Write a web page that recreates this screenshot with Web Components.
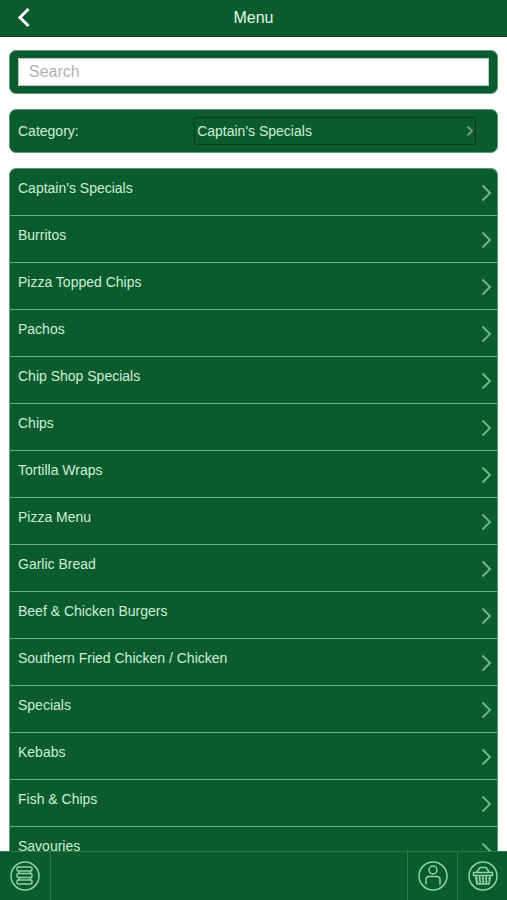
<!DOCTYPE html>
<html lang="en">
<head>
<meta charset="utf-8">
<meta name="viewport" content="width=device-width, initial-scale=1">
<title>Menu</title>
<style>
  html,
  body {
    height: 100%;
    margin: 0;
  }

  body {
    --green: #0a5c2e;
    --text: #cdeed6;
    --line: #6fae86;
    background: #fff;
    color: var(--text);
    font-family: "Liberation Sans", Arial, sans-serif;
    font-size: 14px;
    line-height: 16px;
  }
</style>
</head>
<body>
<menu-page>
  <title-bar slot="header">Menu</title-bar>
  <card-panel><search-box></search-box></card-panel>
  <card-panel><category-picker></category-picker></card-panel>
  <category-list></category-list>
  <tab-bar slot="footer"></tab-bar>
</menu-page>

<script>
const categories = [
  "Captain's Specials",
  "Burritos",
  "Pizza Topped Chips",
  "Pachos",
  "Chip Shop Specials",
  "Chips",
  "Tortilla Wraps",
  "Pizza Menu",
  "Garlic Bread",
  "Beef & Chicken Burgers",
  "Southern Fried Chicken / Chicken",
  "Specials",
  "Kebabs",
  "Fish & Chips",
  "Savouries",
];

function makeTemplate(html) {
  const template = document.createElement("template");
  template.innerHTML = html;
  return template;
}

class BaseElement extends HTMLElement {
  constructor() {
    super();
    this.shadow = this.attachShadow({ mode: "open" });
    this.shadow.append(this.constructor.template.content.cloneNode(true));
  }
}

class MenuPage extends BaseElement {
  static template = makeTemplate(`
<style>
  :host {
    display: flex;
    flex-direction: column;
    height: 100vh;
  }
  main {
    flex: 1;
    min-height: 0;
    box-sizing: border-box;
    display: flex;
    flex-direction: column;
    gap: 15px;
    padding: 13px 9px 0;
    overflow-y: auto;
    scrollbar-width: none;
  }
</style>
<slot name="header"></slot>
<main><slot></slot></main>
<slot name="footer"></slot>
`);
}

class TitleBar extends BaseElement {
  static template = makeTemplate(`
<style>
  :host {
    display: grid;
    grid-template-columns: 48px 1fr 48px;
    align-items: center;
    height: 36px;
    background: var(--green);
    border-bottom: 1px solid #0a4423;
  }
  button {
    display: flex;
    align-items: center;
    height: 36px;
    padding: 0 0 0 16px;
    border: 0;
    background: none;
    color: #fff;
    cursor: pointer;
  }
  h1 {
    margin: 0;
    font-size: 16px;
    font-weight: normal;
    line-height: 20px;
    text-align: center;
    color: #e2f8e8;
  }
</style>
<button type="button" aria-label="Back">
  <svg width="16" height="20" viewBox="0 0 16 20" fill="none" stroke="currentColor" stroke-width="3"><path d="M12.5 1L4 9.500l8.500 8.500"/></svg>
</button>
<h1><slot></slot></h1>
`);
}

class CardPanel extends BaseElement {
  static template = makeTemplate(`
<style>
  :host {
    display: block;
    flex: none;
    padding: 7px 8px;
    border: 1px solid #5b9a76;
    border-radius: 7px;
    background: var(--green);
  }
</style>
<slot></slot>
`);
}

class SearchBox extends BaseElement {
  static template = makeTemplate(`
<style>
  :host {
    display: block;
  }
  input {
    display: block;
    box-sizing: border-box;
    width: 100%;
    height: 28px;
    padding: 0 10px;
    border: 1px solid #b9d3c1;
    border-radius: 0;
    background: #fff;
    color: #333;
    font: 16px "Liberation Sans", Arial, sans-serif;
  }
  input::placeholder {
    color: #b0b0b0;
  }
</style>
<input type="search" placeholder="Search" aria-label="Search">
`);
}

class CategoryPicker extends BaseElement {
  static template = makeTemplate(`
<style>
  :host {
    display: grid;
    grid-template-columns: 5fr 8fr;
    align-items: center;
    padding-right: 13px;
  }
  .field {
    display: grid;
    align-items: center;
  }
  .field > * {
    grid-area: 1 / 1;
  }
  select {
    appearance: none;
    box-sizing: border-box;
    width: 100%;
    height: 28px;
    padding: 0 16px 0 2px;
    border: 1px solid #063c1c;
    border-radius: 1px;
    background: var(--green);
    color: inherit;
    font: inherit;
  }
  svg {
    justify-self: end;
    margin-right: 2px;
    pointer-events: none;
  }
</style>
<label for="category">Category:</label>
<div class="field">
  <select id="category"></select>
  <svg width="8" height="12" viewBox="0 0 8 12" fill="none" stroke="#6f9a72" stroke-width="2"><path d="M1.5 1.500L6 6l-4.500 4.500"/></svg>
</div>
`);

  connectedCallback() {
    const select = this.shadow.querySelector("select");
    select.replaceChildren(...categories.map((name) => new Option(name)));
  }
}

class CategoryRow extends BaseElement {
  static template = makeTemplate(`
<style>
  :host {
    display: block;
  }
  a {
    display: flex;
    justify-content: space-between;
    box-sizing: border-box;
    height: 47px;
    padding: 11px 5px 0 8px;
    border-bottom: 1px solid var(--line);
    color: inherit;
    text-decoration: none;
  }
  svg {
    margin-top: 4px;
  }
</style>
<a href="#">
  <span><slot></slot></span>
  <svg width="11" height="18" viewBox="0 0 11 18" fill="none" stroke="#72b58a" stroke-width="2"><path d="M1.5 1.500L9 9l-7.500 7.500"/></svg>
</a>
`);
}

class CategoryList extends BaseElement {
  static template = makeTemplate(`
<style>
  :host {
    display: block;
    flex: none;
    border: 1px solid #5b9a76;
    border-bottom: 0;
    border-radius: 7px 7px 0 0;
    background: var(--green);
  }
</style>
<nav></nav>
`);

  connectedCallback() {
    const nav = this.shadow.querySelector("nav");
    nav.replaceChildren(...categories.map((name) => {
      const row = document.createElement("category-row");
      row.textContent = name;
      return row;
    }));
  }
}

class TabBar extends BaseElement {
  static template = makeTemplate(`
<style>
  :host {
    display: grid;
    grid-template-columns: 51px 1fr 50px 50px;
    flex: none;
    height: 48px;
    border-top: 1px solid #2b7a4a;
    background: var(--green);
  }
  button {
    display: grid;
    place-items: center;
    padding: 0;
    border: 0 solid #2b7a4a;
    background: none;
    color: #8fd3a6;
    cursor: pointer;
  }
  .orders {
    border-right-width: 1px;
  }
  .account,
  .basket {
    border-left-width: 1px;
  }
  .account {
    grid-column: 3;
  }
  svg {
    fill: none;
    stroke: currentColor;
    stroke-width: 1.5;
    stroke-linejoin: round;
  }
</style>
<button class="orders" type="button" aria-label="Orders">
  <svg width="30" height="30" viewBox="0 0 30 30">
    <circle cx="15" cy="15" r="14"/>
    <rect x="7" y="6" width="15" height="4" rx="1.5"/>
    <rect x="7" y="12.5" width="15" height="4" rx="1.5"/>
    <rect x="7" y="19" width="15" height="4" rx="1.5"/>
    <path d="M9 10v2.500M20.500 10v2.500M9 16.500V19M20.500 16.500V19"/>
  </svg>
</button>
<button class="account" type="button" aria-label="Account">
  <svg width="30" height="30" viewBox="0 0 30 30">
    <circle cx="15" cy="15" r="14"/>
    <circle cx="15" cy="9" r="4"/>
    <path d="M8 23.500V18.500q0-3 3-3h8q3 0 3 3v5"/>
  </svg>
</button>
<button class="basket" type="button" aria-label="Basket">
  <svg width="30" height="30" viewBox="0 0 30 30">
    <circle cx="15" cy="15" r="14"/>
    <path d="M5.5 11.500h19v3h-19zM7.500 14.500l1.500 8.500h12l1.500-8.500M8.500 11.500l3.500-5h6l3.500 5"/>
    <path d="M8 17.500h14M8.500 20.500h13M11.500 15l.5 8M15 15v8M18.500 15l-.5 8" stroke-dasharray="2 1"/>
  </svg>
</button>
`);
}

customElements.define("menu-page", MenuPage);
customElements.define("title-bar", TitleBar);
customElements.define("card-panel", CardPanel);
customElements.define("search-box", SearchBox);
customElements.define("category-picker", CategoryPicker);
customElements.define("category-row", CategoryRow);
customElements.define("category-list", CategoryList);
customElements.define("tab-bar", TabBar);
</script>
</body>
</html>
